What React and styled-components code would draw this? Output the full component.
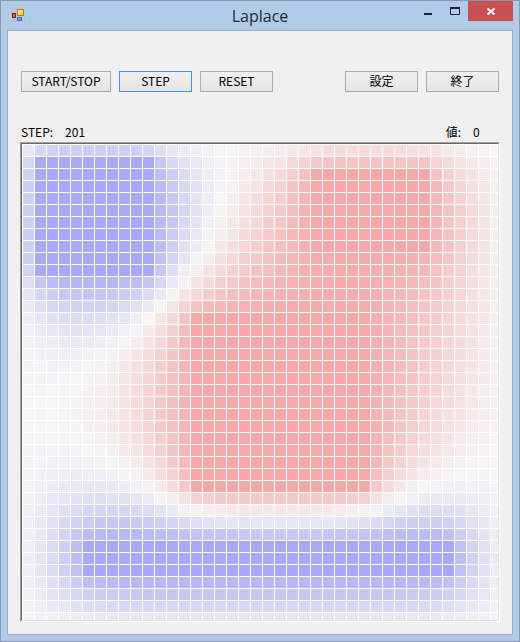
import React from "react";
import styled, { createGlobalStyle } from "styled-components";

const GlobalStyle = createGlobalStyle`
  * { box-sizing: border-box; }
  body { margin: 0; background: #b0cbe8; }
`;

/* ---- Laplace relaxation on a square lattice, zero outside the edges ---- */
const SIZE = 40;
const PITCH = 12;
const VIEW = 476;
const STEPS = 201;

const electrodes = [
  { col: [1, 10], row: [1, 10], value: -1 },
  { col: [24, 33], row: [2, 8], value: 1 },
  { col: [14, 28], row: [14, 28], value: 1 },
  { col: [5, 35], row: [33, 35], value: -1 },
];

function fixedValue(x, y) {
  const hit = electrodes.find(
    ({ col, row }) => x >= col[0] && x <= col[1] && y >= row[0] && y <= row[1]
  );
  return hit ? hit.value : null;
}

function relax(steps) {
  const fixed = Array.from({ length: SIZE }, (_, y) =>
    Array.from({ length: SIZE }, (_, x) => fixedValue(x, y))
  );
  let field = fixed.map((line) => line.map((v) => v ?? 0));
  for (let n = 0; n < steps; n += 1) {
    const prev = field;
    const at = (x, y) => prev[y]?.[x] ?? 0;
    field = prev.map((line, y) =>
      line.map(
        (_, x) =>
          fixed[y][x] ??
          (at(x - 1, y) + at(x + 1, y) + at(x, y - 1) + at(x, y + 1)) / 4
      )
    );
  }
  return field;
}

function shade(v) {
  const fade = Math.round(246 - 78 * Math.abs(v));
  return v > 0 ? `rgb(246,${fade},${fade})` : `rgb(${fade},${fade},246)`;
}

const field = relax(STEPS);

/* ---- Window parts ---- */
const Window = styled.main`
  min-height: 100vh;
  display: flex;
  flex-direction: column;
  border: 1px solid #8599b4;
  background: #b0cbe8;
  color: #000;
  font: 12px/16px "Noto Sans CJK JP", sans-serif;
`;

const TitleBar = styled.header`
  height: 29px;
  display: grid;
  grid-template-columns: 1fr auto 1fr;
  padding: 0 6px 0 10px;
`;

const AppIcon = styled.svg`
  width: 14px;
  height: 14px;
  margin-top: 7px;
`;

const Title = styled.h1`
  margin: 0;
  padding-right: 4px;
  color: #222a35;
  font: 400 16px/30px "Open Sans", sans-serif;
`;

const Controls = styled.div`
  display: flex;
  justify-content: flex-end;
  align-items: flex-start;
`;

const ControlButton = styled.button`
  width: ${({ $close }) => ($close ? 45 : 27)}px;
  height: 20px;
  padding: 0;
  border: 0;
  background: ${({ $close }) => ($close ? "#c75050" : "transparent")};
  color: ${({ $close }) => ($close ? "#fff" : "#1f2227")};

  svg {
    display: block;
    margin: auto;
  }
`;

const Client = styled.section`
  flex: 1;
  margin: 0 6px 6px;
  padding: 40px 12px 12px;
  border: 1px solid #93afcb;
  background: #f0f0f0;
`;

const Toolbar = styled.div`
  display: flex;
  justify-content: space-between;
  padding: 0 1px;
`;

const ButtonGroup = styled.div`
  display: flex;
  gap: 8px;
`;

const PushButton = styled.button`
  width: ${({ $wide }) => ($wide ? 90 : 73)}px;
  height: 21px;
  padding: 0 0 2px;
  border: 1px solid ${({ $active }) => ($active ? "#3c96ec" : "#acacac")};
  background: linear-gradient(#f0f0f0, #e4e4e4);
  color: inherit;
  font: inherit;
  line-height: 16px;
`;

const Readouts = styled.div`
  display: flex;
  justify-content: space-between;
  margin-top: 32px;
  padding: 0 1px 2px;
`;

const Readout = styled.div`
  display: flex;
  gap: 12px;
`;

const Value = styled.output`
  min-width: 26px;
`;

const Plot = styled.figure`
  margin: 0;
  border: 1px solid;
  border-color: #a0a0a0 #fff #fff #a0a0a0;
`;

const PlotInner = styled.div`
  border: 1px solid;
  border-color: #696969 #e3e3e3 #e3e3e3 #696969;
  background: #fff;

  svg {
    display: block;
    width: 100%;
    height: auto;
  }
`;

function FormIcon() {
  return (
    <AppIcon viewBox="0 0 14 14" aria-hidden="true">
      <defs>
        <linearGradient id="gold" x2="1" y2="1">
          <stop stopColor="#fff3ad" />
          <stop offset="1" stopColor="#f1b91c" />
        </linearGradient>
        <linearGradient id="sky" x2="1" y2="1">
          <stop stopColor="#9cc5ff" />
          <stop offset="1" stopColor="#3168d0" />
        </linearGradient>
      </defs>
      <path d="M.5 4.5V.5h5M.5 11v2.5h13V9M.5 4.5h4M5.5.5v13M5.5 8.5h8" fill="none" stroke="#bcbfc4" />
      <rect x="6.5" y="1.5" width="6" height="6" fill="url(#gold)" stroke="#b5811c" />
      <rect x="1.5" y="5.5" width="3" height="4" fill="#e8604f" stroke="#9c1410" />
      <rect x="6.5" y="9.5" width="4" height="3" fill="url(#sky)" stroke="#3d72d4" />
    </AppIcon>
  );
}

function HeatMap() {
  return (
    <svg viewBox={`0 0 ${VIEW} ${VIEW}`} shapeRendering="crispEdges" role="img" aria-label="Laplace">
      {field.map((line, y) =>
        line.map((v, x) => (
          <rect
            key={`${x}-${y}`}
            x={x * PITCH + 1}
            y={y * PITCH + 1}
            width={PITCH - 1}
            height={PITCH - 1}
            fill={shade(v)}
          />
        ))
      )}
    </svg>
  );
}

export default function App() {
  return (
    <Window lang="ja">
      <GlobalStyle />
      <TitleBar>
        <FormIcon />
        <Title>Laplace</Title>
        <Controls>
          <ControlButton aria-label="Minimize">
            <svg width="27" height="20">
              <path d="M10 13h8" stroke="currentColor" strokeWidth="2" />
            </svg>
          </ControlButton>
          <ControlButton aria-label="Maximize">
            <svg width="27" height="20">
              <path d="M9.500 6v7.500h9V6" fill="none" stroke="currentColor" />
              <path d="M9 7h10" stroke="currentColor" strokeWidth="2" />
            </svg>
          </ControlButton>
          <ControlButton $close aria-label="Close">
            <svg width="45" height="20">
              <path d="M19.500 7.500l7 6M26.500 7.500l-7 6" stroke="currentColor" strokeWidth="2" />
            </svg>
          </ControlButton>
        </Controls>
      </TitleBar>
      <Client>
        <Toolbar>
          <ButtonGroup>
            <PushButton $wide>START/STOP</PushButton>
            <PushButton $active>STEP</PushButton>
            <PushButton>RESET</PushButton>
          </ButtonGroup>
          <ButtonGroup>
            <PushButton>設定</PushButton>
            <PushButton>終了</PushButton>
          </ButtonGroup>
        </Toolbar>
        <Readouts>
          <Readout>
            <label htmlFor="step-count">STEP:</label>
            <Value id="step-count">{STEPS}</Value>
          </Readout>
          <Readout>
            <label htmlFor="cell-value">値:</label>
            <Value id="cell-value">0</Value>
          </Readout>
        </Readouts>
        <Plot>
          <PlotInner>
            <HeatMap />
          </PlotInner>
        </Plot>
      </Client>
    </Window>
  );
}
